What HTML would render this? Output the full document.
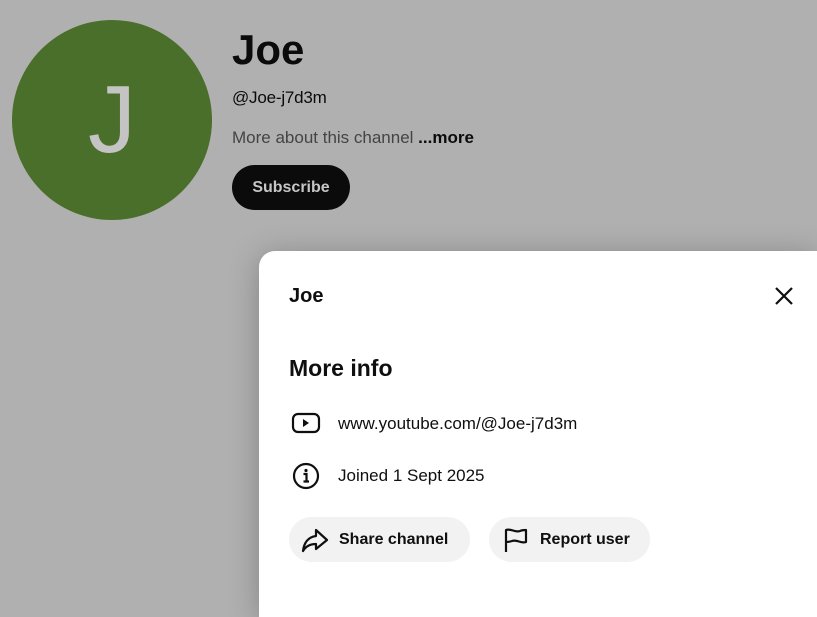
<!DOCTYPE html>
<html style="width:817px;height:617px;overflow:hidden"><head><style>
body{margin:0;width:817px;height:617px;background:#b0b0b0;font-family:"Liberation Sans",Arial,sans-serif;position:relative;overflow:hidden}
.av{position:absolute;left:12px;top:20px;width:200px;height:200px;border-radius:50%;background:#4a6f2b;color:#c4c4c4;font-size:96px;text-align:center;line-height:200px}
.t{position:absolute;left:232px}
.dlg{position:absolute;left:259px;top:251px;width:558px;height:366px;background:#fff;border-radius:16px 0 0 0;box-shadow:0 4px 30px rgba(0,0,0,.25)}
.d{position:absolute;color:#0f0f0f}
.btn{position:absolute;top:266px;height:45px;border-radius:23px;background:#f2f2f2;font-size:16px;font-weight:bold;line-height:45px;color:#0f0f0f}
</style></head><body>
<div class="av">J</div>
<div class="t" style="top:26px;font-size:42px;font-weight:bold;color:#0b0b0b">Joe</div>
<div class="t" style="top:88px;font-size:17px;color:#0b0b0b;letter-spacing:-0.2px">@Joe-j7d3m</div>
<div class="t" style="top:128px;font-size:17px;color:#444">More about this channel <b style="color:#0b0b0b">...more</b></div>
<div class="t" style="top:165px;width:118px;height:45px;border-radius:23px;background:#0b0b0b;color:#c6c6c6;font-size:16px;font-weight:bold;text-align:center;line-height:45px">Subscribe</div>
<div class="dlg">
<div class="d" style="left:30px;top:34px;font-size:20px;font-weight:bold">Joe</div>
<svg class="d" style="left:514px;top:34px" width="22" height="22" viewBox="0 0 22 22"><path d="M3 3L19 19M19 3L3 19" stroke="#0f0f0f" stroke-width="2.2"/></svg>
<div class="d" style="left:30px;top:104px;font-size:23px;font-weight:bold">More info</div>
<svg class="d" style="left:32px;top:161px" width="30" height="22" viewBox="0 0 30 22"><rect x="2" y="2" width="26" height="18" rx="5" fill="none" stroke="#0f0f0f" stroke-width="2.2"/><path d="M12 7L18 11L12 15Z" fill="#0f0f0f"/></svg>
<div class="d" style="left:79px;top:163px;font-size:17px">www.youtube.com/@Joe-j7d3m</div>
<svg class="d" style="left:33px;top:211px" width="28" height="28" viewBox="0 0 28 28"><circle cx="14" cy="14" r="12" fill="none" stroke="#0f0f0f" stroke-width="2.2"/><circle cx="14" cy="8.5" r="1.6" fill="#0f0f0f"/><path d="M11.5 12H14.5V19M11.5 19.5H17" stroke="#0f0f0f" stroke-width="2.2" fill="none"/></svg>
<div class="d" style="left:79px;top:215px;font-size:17px">Joined 1 Sept 2025</div>
<div class="btn" style="left:30px;width:181px"><svg style="position:absolute;left:12px;top:10px" width="28" height="26" viewBox="0 0 28 26"><path d="M15 3L26 13L15 22V17C9 17 5 19 2 24C3 16 7 10 15 9Z" fill="none" stroke="#0f0f0f" stroke-width="2.2" stroke-linejoin="round"/></svg><span style="position:absolute;left:50px">Share channel</span></div>
<div class="btn" style="left:230px;width:161px"><svg style="position:absolute;left:14px;top:10px" width="26" height="26" viewBox="0 0 26 26"><path d="M3 25V3C8 1 12 6 17 4C19 3 21 3 23 3V15C18 17 14 12 9 14C6 15 4 15 3 15" fill="none" stroke="#0f0f0f" stroke-width="2.2" stroke-linejoin="round"/></svg><span style="position:absolute;left:51px">Report user</span></div>
</div>
</body></html>
